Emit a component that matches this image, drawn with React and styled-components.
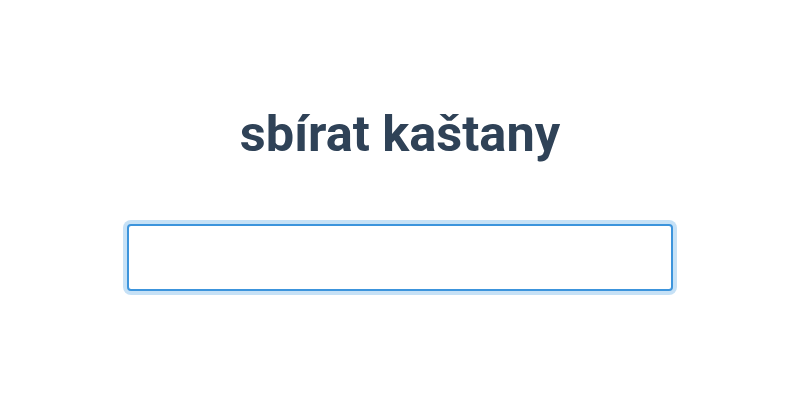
import React from 'react';
import styled, { createGlobalStyle } from 'styled-components';

const GlobalStyle = createGlobalStyle`
    body {
        margin: 0;
        background: #ffffff;
        font-family: Roboto, 'Noto Sans', sans-serif;
    }
`

const Page = styled.div`
    width: 800px;
    height: 400px;
    display: flex;
    flex-direction: column;
    align-items: center;
    padding-top: 104px;
    box-sizing: border-box;
`

const Title = styled.h1`
    margin: 0;
    font-family: Roboto, sans-serif;
    font-weight: 700;
    font-size: 50.5px;
    line-height: 60px;
    color: #2f4257;
`

const Field = styled.input`
    margin-top: 60px;
    width: 546px;
    height: 67px;
    box-sizing: border-box;
    border: 2px solid #3c94dc;
    border-radius: 4px;
    box-shadow: 0 0 0 4px #c6e1f6;
    outline: none;
    font-size: 20px;
    padding: 0 12px;
`

function App()
{
    return (
        <>
            <GlobalStyle />
            <Page>
                <Title>sbírat kaštany</Title>
                <Field type="text" />
            </Page>
        </>
    )
}

export default App;
